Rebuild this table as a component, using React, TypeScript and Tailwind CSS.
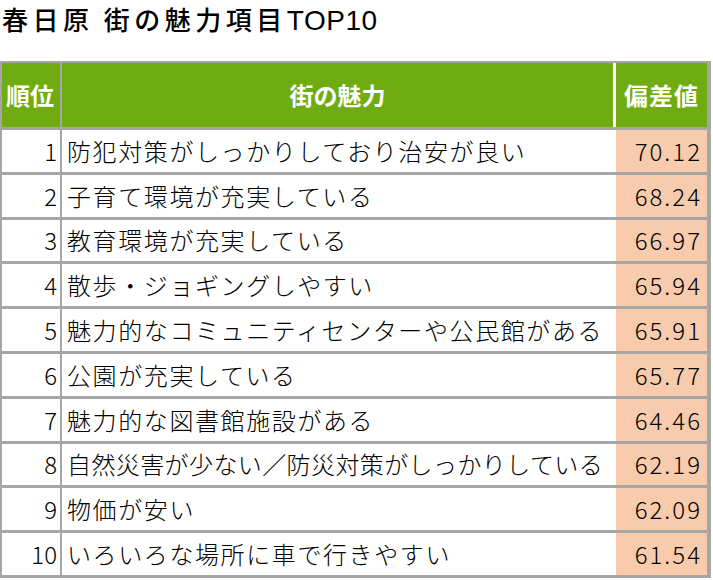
const rows: { rank: number; label: string; score: string; tight?: boolean }[] = [
  { rank: 1, label: '防犯対策がしっかりしており治安が良い', score: '70.12' },
  { rank: 2, label: '子育て環境が充実している', score: '68.24' },
  { rank: 3, label: '教育環境が充実している', score: '66.97' },
  { rank: 4, label: '散歩・ジョギングしやすい', score: '65.94' },
  { rank: 5, label: '魅力的なコミュニティセンターや公民館がある', score: '65.91' },
  { rank: 6, label: '公園が充実している', score: '65.77' },
  { rank: 7, label: '魅力的な図書館施設がある', score: '64.46' },
  { rank: 8, label: '自然災害が少ない／防災対策がしっかりしている', score: '62.19', tight: true },
  { rank: 9, label: '物価が安い', score: '62.09' },
  { rank: 10, label: 'いろいろな場所に車で行きやすい', score: '61.54' },
]

const jp = "font-['Noto_Sans_CJK_JP','Noto_Sans',sans-serif]"

export default function App() {
  return (
    <div className={`w-[713px] h-[580px] bg-white text-black ${jp}`}>
      <h1 className="h-[61px] pl-[2px] pt-[6px] text-[26px] leading-none font-medium tracking-[4.5px] whitespace-nowrap">
        春日原 街の魅力項目
        <span className="font-['Liberation_Sans',sans-serif] tracking-[0.5px] font-normal text-[28px]">TOP10</span>
      </h1>

      <div className="w-[711px] border-t-2 border-l-2 border-r-4 border-[#a6a6a6]">
        {/* header */}
        <div className="flex h-[67px] bg-[#6fac12] border-b-[3px] border-[#a6a6a6] text-white font-bold text-[24px]">
          <div className="w-[60px] shrink-0 border-r-2 border-[#a6a6a6] flex items-center justify-center pr-[2px]">
            順位
          </div>
          <div className="flex-1 min-w-0 flex items-center justify-center">街の魅力</div>
          <div className="w-[94px] shrink-0 border-l-[3px] border-white flex items-center justify-center tracking-[1px]">
            偏差値
          </div>
        </div>

        {rows.map((r) => (
          <div key={r.rank} className="flex h-[44.8px] border-b-[3px] border-[#a6a6a6] text-[24px] leading-none font-light">
            <div className="w-[60px] shrink-0 border-r-2 border-[#a6a6a6] flex items-center justify-end pr-[3px]">
              {r.rank}
            </div>
            <div
              className={`flex-1 min-w-0 flex items-center pl-[5px] whitespace-nowrap overflow-hidden ${
                r.tight ? 'tracking-[0.4px]' : 'tracking-[1.6px]'
              }`}
            >
              {r.label}
            </div>
            <div className="w-[94px] shrink-0 border-l-[3px] border-white bg-[#f8cbad] flex items-center justify-end pr-[5px] tracking-[2px]">
              {r.score}
            </div>
          </div>
        ))}
      </div>
    </div>
  )
}
